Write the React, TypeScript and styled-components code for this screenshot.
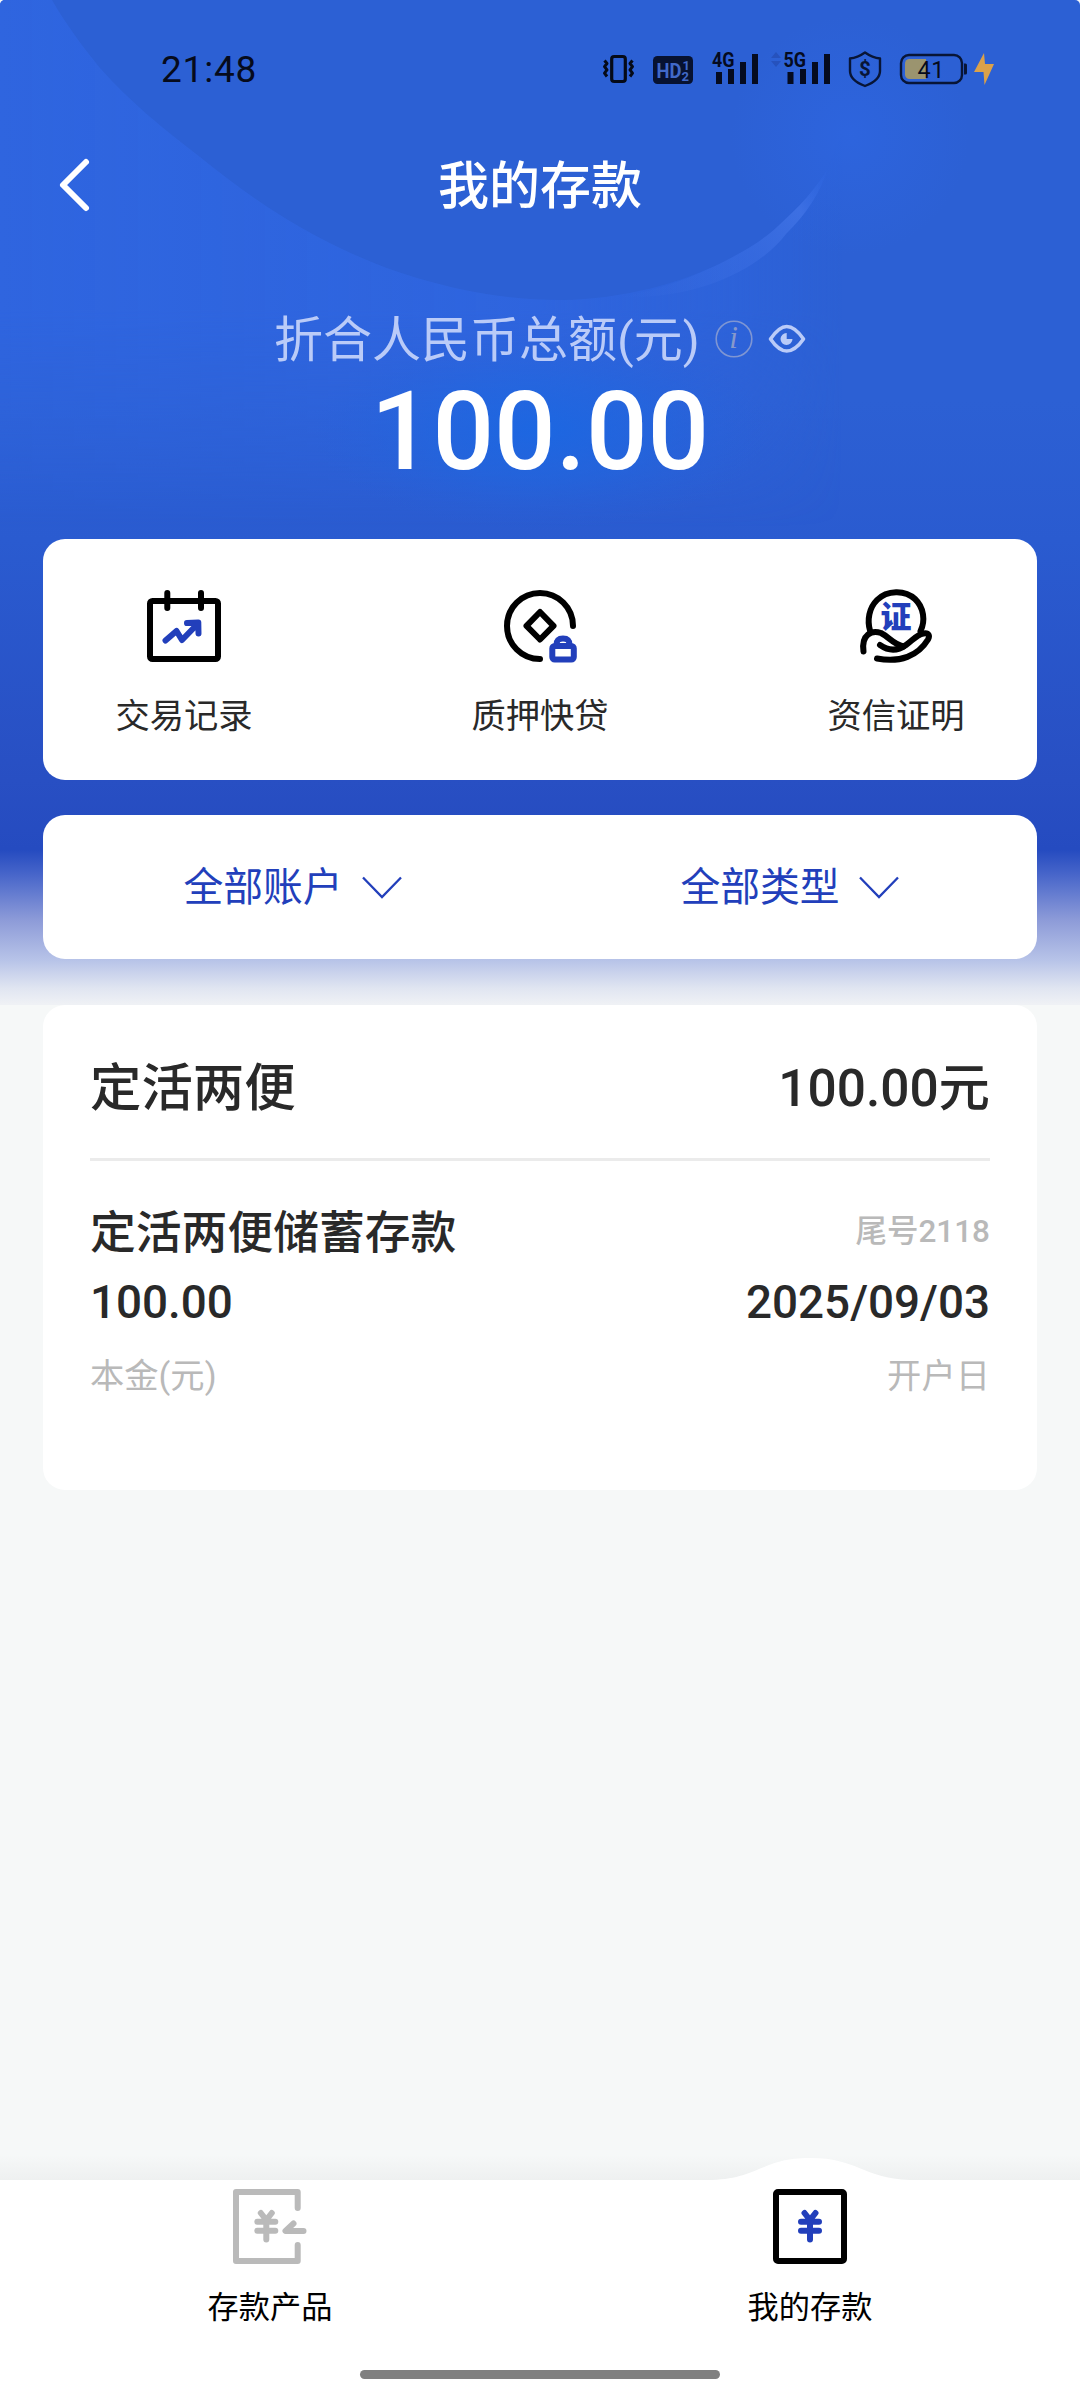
import React from "react";
import styled, { createGlobalStyle } from "styled-components";

const GlobalStyle = createGlobalStyle`
  *, *::before, *::after { box-sizing: border-box; }
  body { margin: 0; background: #f6f8f8; }
  svg { display: block; }
`;

const BLUE = "#223fbb";
const INK = "#292929";
const MUTED = "#b9b9b9";

const Screen = styled.main`
  position: relative;
  isolation: isolate;
  display: flex;
  flex-direction: column;
  width: 1080px;
  height: 2400px;
  overflow: hidden;
  border-radius: 5px 5px 0 0;
  background: #f6f8f8;
  color: ${INK};
  font-family: Roboto, "Noto Sans CJK SC", sans-serif;
  font-weight: 400;
`;

const Backdrop = styled.div`
  position: absolute;
  z-index: -1;
  top: 0;
  left: 0;
  width: 1080px;
  height: 1005px;
  background: linear-gradient(
    180deg,
    #2c60d4 0,
    #2c60d4 400px,
    #2a5bd0 540px,
    #284fc3 780px,
    #254bc0 850px,
    #4866ca 875px,
    #8d9bd8 920px,
    #b7c3e8 960px,
    #e0e5f1 988px,
    #eff1f5 1004px
  );
`;

const StatusBar = styled.header`
  display: flex;
  align-items: center;
  justify-content: space-between;
  height: 138px;
  padding: 0 84px 0 161px;
  color: #060b1c;
`;

const Clock = styled.time`
  padding-top: 2px;
  font-size: 37px;
  line-height: 44px;
  letter-spacing: 0.8px;
`;

const TitleBar = styled.div`
  display: grid;
  grid-template-columns: 120px 1fr 120px;
  align-items: center;
  height: 92px;
`;

const BackButton = styled.button`
  display: flex;
  align-items: center;
  height: 92px;
  padding: 0 0 0 56px;
  border: 0;
  background: none;
`;

const Title = styled.h1`
  margin: 0;
  padding-top: 5px;
  color: #fff;
  font-size: 51px;
  font-weight: 500;
  line-height: 60px;
  text-align: center;
`;

const Summary = styled.section`
  display: flex;
  flex-direction: column;
  align-items: center;
  gap: 7px;
  padding-top: 81px;
`;

const SummaryLabel = styled.div`
  display: flex;
  align-items: center;
  gap: 15px;
  height: 60px;
  color: #bacbf8;
  font-size: 49px;
  line-height: 60px;

  svg {
    margin-bottom: 4px;
  }
`;

const Amount = styled.div`
  color: #fff;
  font-size: 108.5px;
  font-weight: 500;
  line-height: 108px;
`;

const Card = styled.section`
  margin: 0 43px;
  border-radius: 22px;
  background: #fff;
`;

const Actions = styled(Card)`
  display: flex;
  justify-content: space-between;
  height: 241px;
  margin-top: 53px;
  padding: 47px 73px 0;
`;

const Action = styled.button`
  display: flex;
  flex-direction: column;
  align-items: center;
  gap: 26px;
  width: 136px;
  padding: 0;
  border: 0;
  background: none;
  color: ${INK};
  font-family: inherit;
  font-size: 34.3px;
  line-height: 48px;
  white-space: nowrap;
`;

const Filters = styled(Card)`
  display: grid;
  grid-template-columns: 1fr 1fr;
  height: 144px;
  margin-top: 35px;
`;

const Filter = styled.button`
  display: flex;
  align-items: center;
  justify-content: center;
  gap: 19px;
  padding: 2px 0 0 2px;
  border: 0;
  background: none;
  color: ${BLUE};
  font-family: inherit;
  font-size: 39.8px;
  line-height: 50px;
`;

const Deposit = styled(Card)`
  height: 485px;
  margin-top: 46px;
  padding: 0 47px;
`;

const Row = styled.div<{ $height: number }>`
  display: flex;
  align-items: center;
  justify-content: space-between;
  height: ${(p) => p.$height}px;
`;

const DepositHead = styled(Row)`
  padding-top: 3px;
  border-bottom: 3px solid #ebebeb;
  font-size: 51.4px;
  font-weight: 500;
`;

const DepositBody = styled.div`
  padding-top: 33px;
`;

const Strong = styled.span`
  color: ${INK};
  font-size: 45.8px;
  font-weight: 500;
`;

const Tail = styled.span`
  margin-bottom: 2px;
  color: ${MUTED};
  font-size: 31.5px;
  font-weight: 500;
`;

const Caption = styled.span`
  color: ${MUTED};
  font-size: 34.3px;
`;

const TabBar = styled.nav`
  position: relative;
  display: grid;
  grid-template-columns: 1fr 1fr;
  align-content: space-between;
  height: 220px;
  margin-top: auto;
  background: #fff;
`;

const TabEdge = styled.div`
  position: absolute;
  left: 0;
  bottom: 100%;
  width: 1080px;
  height: 42px;
`;

const Tab = styled.button`
  display: flex;
  flex-direction: column;
  align-items: center;
  gap: 20px;
  padding: 6px 0 0;
  border: 0;
  background: none;
  color: #000;
  font-family: inherit;
  font-size: 31.2px;
  line-height: 40px;
`;

const HomeIndicator = styled.div`
  grid-column: 1 / -1;
  justify-self: center;
  width: 360px;
  height: 9px;
  margin-bottom: 21px;
  border-radius: 5px;
  background: #808080;
`;

const Arcs = () => (
  <svg width="1080" height="620" viewBox="0 0 1080 620" fill="none">
    <defs>
      <linearGradient id="sweep" x1="0" y1="0" x2="1080" y2="0" gradientUnits="userSpaceOnUse">
        <stop offset="0" stopColor="#2f65df" />
        <stop offset="0.5" stopColor="#2f65df" stopOpacity="0.9" />
        <stop offset="0.68" stopColor="#2f65df" stopOpacity="0.5" />
        <stop offset="0.78" stopColor="#2f65df" stopOpacity="0" />
      </linearGradient>
      <linearGradient id="down" x1="0" y1="0" x2="0" y2="620" gradientUnits="userSpaceOnUse">
        <stop offset="0" stopColor="#fff" />
        <stop offset="0.5" stopColor="#fff" />
        <stop offset="0.85" stopColor="#fff" stopOpacity="0" />
      </linearGradient>
      <mask id="fall">
        <rect width="1080" height="620" fill="url(#down)" />
      </mask>
      <linearGradient id="streak" x1="620" y1="300" x2="830" y2="165" gradientUnits="userSpaceOnUse">
        <stop offset="0" stopColor="#3d70e4" stopOpacity="0" />
        <stop offset="0.55" stopColor="#3d70e4" stopOpacity="0.5" />
        <stop offset="0.8" stopColor="#4274e6" stopOpacity="0.75" />
        <stop offset="1" stopColor="#2f6aea" stopOpacity="0" />
      </linearGradient>
      <radialGradient id="spot" gradientUnits="userSpaceOnUse" cx="850" cy="135" r="120">
        <stop offset="0" stopColor="#2e67e4" stopOpacity="0.6" />
        <stop offset="1" stopColor="#2e67e4" stopOpacity="0" />
      </radialGradient>
      <radialGradient
        id="halo"
        gradientUnits="userSpaceOnUse"
        cx="0"
        cy="0"
        r="1"
        gradientTransform="translate(540 430) scale(230 100)"
      >
        <stop offset="0" stopColor="#1868e4" stopOpacity="0.8" />
        <stop offset="0.5" stopColor="#1c68e2" stopOpacity="0.45" />
        <stop offset="1" stopColor="#2462dc" stopOpacity="0" />
      </radialGradient>
    </defs>
    <path
      mask="url(#fall)"
      fill="url(#sweep)"
      d="M0 0H52C66 24 82 46 100 68C130 102 165 130 200 157C235 185 265 207 300 227C340 250 380 267 417 278C465 292 510 300 562 300C622 299 680 284 727 260C748 249 764 239 777 227C800 206 815 190 827 170L900 0H1080V620H0Z"
    />
    <circle cx="850" cy="135" r="120" fill="url(#spot)" />
    <path
      d="M620 297C660 290 696 276 727 260C748 249 764 239 777 227C800 206 815 190 828 168C820 194 806 214 786 234C760 268 700 300 620 297Z"
      fill="url(#streak)"
    />
    <ellipse cx="540" cy="430" rx="230" ry="100" fill="url(#halo)" />
  </svg>
);

const StatusIcons = () => (
  <svg width="396" height="44" viewBox="600 47 396 44" fill="none">
    <g stroke="#050a18" strokeLinejoin="round">
      <rect x="611.7" y="56.5" width="13.6" height="25" rx="2.5" strokeWidth="3.2" />
      <path
        strokeWidth="3"
        d="M604.500 60.500l2.500 3-2.500 3.200 2.500 3.200-2.500 3.200 2.500 3.400M632.500 60.500l-2.500 3 2.500 3.200-2.500 3.200 2.500 3.200-2.500 3.400"
      />
    </g>
    <rect x="653" y="56" width="40" height="28" rx="4.500" fill="#071231" />
    <g fill="#4169c8" fontFamily="Roboto, sans-serif" fontWeight="700">
      <text x="656.500" y="78" fontSize="20.500" textLength="25" lengthAdjust="spacingAndGlyphs">HD</text>
      <text x="682.500" y="69.500" fontSize="13">1</text>
      <text x="681.500" y="81" fontSize="13">2</text>
    </g>
    <g fill="#050b1f">
      <path d="M716 72h6v12h-6zM728 69h6v15h-6zM740 62h6v22h-6zM752 54h6v30h-6zM787.500 72h6v12h-6zM800 69h6v15h-6zM812 62h6v22h-6zM824 54h6v30h-6z" />
      <g fontFamily="Roboto, sans-serif" fontWeight="700" fontSize="20">
        <text x="712" y="66.500" textLength="22.500" lengthAdjust="spacingAndGlyphs">4G</text>
        <text x="783.500" y="66.500" textLength="22.500" lengthAdjust="spacingAndGlyphs">5G</text>
      </g>
    </g>
    <path d="M776 52l5 6h-10zM776 67l5-6h-10z" fill="#2652bd" />
    <path
      d="M865 52.500C870 56 875 58 880 58.500V71C880 78 873 83 865 86C857 83 850 78 850 71V58.500C855 58 860 56 865 52.500Z"
      stroke="#081536"
      strokeWidth="2.400"
      strokeLinejoin="round"
    />
    <text x="865" y="76" fontSize="20.500" fontWeight="700" textAnchor="middle" fill="#081536" fontFamily="Roboto, sans-serif">$</text>
    <rect x="901" y="55" width="61" height="28" rx="8" stroke="#081536" strokeWidth="2.400" />
    <path d="M909.500 59H926V79H909.500A4.500 4.500 0 0 1 905 74.500V63.500A4.500 4.500 0 0 1 909.500 59Z" fill="#9b946f" />
    <path d="M964 63.500h1.500q1.500 0 1.500 1.500v8q0 1.500-1.500 1.500H964z" fill="#081536" />
    <text x="917.500" y="78" fontSize="23.500" fill="#060b1c" fontFamily="Roboto, sans-serif" textLength="27">41</text>
    <path d="M984 53L974 72H983.500L984.500 85L994 64H985Z" fill="#dba14a" />
  </svg>
);

const BackIcon = () => (
  <svg width="40" height="60" viewBox="56 154 40 60" fill="none">
    <path d="M86 162L63 185L86 208" stroke="#fff" strokeWidth="6" strokeLinecap="round" strokeLinejoin="round" />
  </svg>
);

const InfoIcon = () => (
  <svg width="38" height="38" viewBox="714 320 38 38" fill="none">
    <circle cx="733" cy="339" r="17.800" stroke="#7f96d3" strokeWidth="1.600" />
    <text
      x="732.500"
      y="348"
      textAnchor="middle"
      fontFamily="Liberation Serif, serif"
      fontStyle="italic"
      fontSize="31"
      fill="#8799cb"
    >
      i
    </text>
  </svg>
);

const EyeIcon = () => (
  <svg width="38" height="30" viewBox="767 324 38 30" fill="none">
    <path
      d="M769.500 339C775 331 780 326.500 785.700 326.500S797 331 802.500 339C797 347 791.500 351 785.700 351S775 347 769.500 339Z"
      stroke="#bacbf8"
      strokeWidth="3.600"
      strokeLinejoin="round"
    />
    <path d="M785.700 333V339H791.500A6 6 0 1 1 785.700 333Z" fill="#bacbf8" />
  </svg>
);

const RecordIcon = () => (
  <svg width="80" height="80" viewBox="144 586 80 80" fill="none" strokeLinecap="round" strokeLinejoin="round">
    <rect x="150" y="601" width="68" height="58" rx="2.500" stroke="#000" strokeWidth="6" />
    <path d="M167.300 593V608M201 593V608" stroke="#000" strokeWidth="6" />
    <path
      d="M165.500 640.500L176.500 631L182 640L198 623.500M187 623L198.300 622.500L198.500 633.500"
      stroke={BLUE}
      strokeWidth="6"
    />
  </svg>
);

const PledgeIcon = () => (
  <svg width="80" height="80" viewBox="500 586 80 80" fill="none" strokeLinecap="round" strokeLinejoin="round">
    <path d="M540 659A33 33 0 1 1 573 626" stroke="#000" strokeWidth="6" />
    <path d="M540 612L553.500 625.800L540 639.500L526.500 625.800Z" stroke="#000" strokeWidth="6" />
    <rect x="552.300" y="646" width="21.500" height="13.500" rx="2.500" stroke={BLUE} strokeWidth="6" />
    <path d="M556.500 645C556.500 640 559 638.500 563 638.500S569.500 640 569.500 645" stroke={BLUE} strokeWidth="6" />
  </svg>
);

const CertificateIcon = () => (
  <svg width="80" height="80" viewBox="856 586 80 80" fill="none" strokeLinecap="round" strokeLinejoin="round">
    <path
      d="M870 630.500C867 620 869 608 877 600C887 590 905 589.500 915 599C924 607.500 925.500 621 920.500 631"
      stroke="#000"
      strokeWidth="6"
    />
    <path d="M863.500 651.500C861 634 872 630 881 633C889 637 893 644 903.500 646.500" stroke="#000" strokeWidth="6" />
    <path
      d="M880 645C890 652 899 650 906 645C913 640 917 634.500 923.500 633.500C929 632.500 930 636 928 639.500C918 656 900 663 877 658.500"
      stroke="#000"
      strokeWidth="6"
    />
    <text
      x="896"
      y="628"
      textAnchor="middle"
      fontSize="31"
      fontWeight="900"
      fill={BLUE}
      fontFamily="Noto Sans CJK SC, sans-serif"
    >
      证
    </text>
  </svg>
);

const ChevronIcon = () => (
  <svg width="40" height="24" viewBox="0 0 40 24" fill="none">
    <path d="M1 1.500L20 21L39 1.500" stroke={BLUE} strokeWidth="2.300" />
  </svg>
);

const Yuan = ({ x, color }: { x: number; color: string }) => (
  <path
    transform={`translate(${x} 0)`}
    d="M-5.500 2213L0 2220L5.500 2213M-9 2221.700H9M-9 2230.700H9M0 2221V2239.500"
    stroke={color}
    strokeWidth="6"
  />
);

const ProductIcon = () => (
  <svg width="82" height="82" viewBox="229 2186 82 82" fill="none" strokeLinecap="round" strokeLinejoin="round">
    <path d="M297.700 2208V2192H236V2261H297.700V2245" stroke="#bababa" strokeWidth="6" />
    <Yuan x={266.3} color="#bababa" />
    <path d="M293.500 2223.500L285.500 2231H303.500" stroke="#bababa" strokeWidth="6" />
  </svg>
);

const MineIcon = () => (
  <svg width="82" height="82" viewBox="769 2186 82 82" fill="none" strokeLinecap="round" strokeLinejoin="round">
    <rect x="776" y="2192" width="68" height="69" rx="2" stroke="#000" strokeWidth="6" />
    <Yuan x={810} color={BLUE} />
  </svg>
);

const BarEdge = () => (
  <svg width="1080" height="42" viewBox="0 2138 1080 42">
    <defs>
      <linearGradient id="lift" x1="0" y1="0" x2="0" y2="1">
        <stop offset="0" stopColor="#eef0f0" stopOpacity="0" />
        <stop offset="1" stopColor="#eef0f0" />
      </linearGradient>
    </defs>
    <rect x="0" y="2155" width="1080" height="25" fill="url(#lift)" />
    <path d="M712 2180C760 2178 762 2158 810 2158S862 2178 910 2180Z" fill="#fff" />
  </svg>
);

const actions = [
  { label: "交易记录", icon: <RecordIcon /> },
  { label: "质押快贷", icon: <PledgeIcon /> },
  { label: "资信证明", icon: <CertificateIcon /> },
];

const filters = ["全部账户", "全部类型"];

const tabs = [
  { label: "存款产品", icon: <ProductIcon /> },
  { label: "我的存款", icon: <MineIcon /> },
];

export default function App() {
  return (
    <>
      <GlobalStyle />
      <Screen>
        <Backdrop>
          <Arcs />
        </Backdrop>
        <StatusBar>
          <Clock>21:48</Clock>
          <StatusIcons />
        </StatusBar>
        <TitleBar>
          <BackButton aria-label="返回">
            <BackIcon />
          </BackButton>
          <Title>我的存款</Title>
        </TitleBar>
        <Summary>
          <SummaryLabel>
            <span>折合人民币总额(元)</span>
            <InfoIcon />
            <EyeIcon />
          </SummaryLabel>
          <Amount>100.00</Amount>
        </Summary>
        <Actions>
          {actions.map((a) => (
            <Action key={a.label}>
              {a.icon}
              <span>{a.label}</span>
            </Action>
          ))}
        </Actions>
        <Filters>
          {filters.map((f) => (
            <Filter key={f}>
              <span>{f}</span>
              <ChevronIcon />
            </Filter>
          ))}
        </Filters>
        <Deposit>
          <DepositHead $height={156}>
            <span>定活两便</span>
            <span>100.00元</span>
          </DepositHead>
          <DepositBody>
            <Row $height={70}>
              <Strong>定活两便储蓄存款</Strong>
              <Tail>尾号2118</Tail>
            </Row>
            <Row $height={76}>
              <Strong>100.00</Strong>
              <Strong>2025/09/03</Strong>
            </Row>
            <Row $height={66}>
              <Caption>本金(元)</Caption>
              <Caption>开户日</Caption>
            </Row>
          </DepositBody>
        </Deposit>
        <TabBar>
          <TabEdge>
            <BarEdge />
          </TabEdge>
          {tabs.map((t) => (
            <Tab key={t.label}>
              {t.icon}
              <span>{t.label}</span>
            </Tab>
          ))}
          <HomeIndicator />
        </TabBar>
      </Screen>
    </>
  );
}
